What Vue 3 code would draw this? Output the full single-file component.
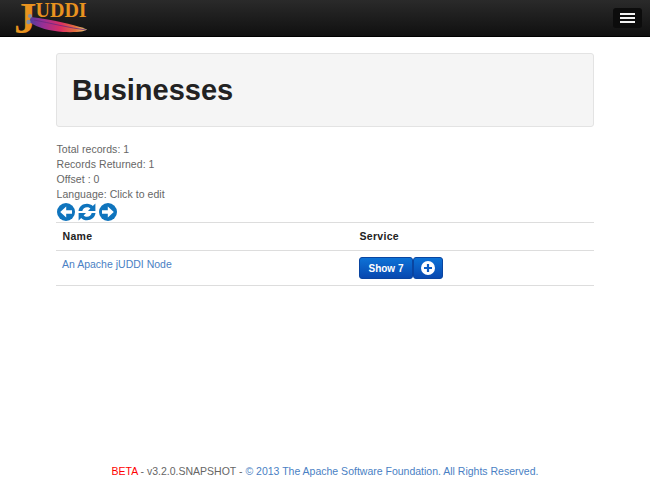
<script setup>
const stats = ['Total records: 1', 'Records Returned: 1', 'Offset : 0', 'Language: Click to edit']
</script>

<template>
  <div class="page">
    <header class="navbar">
      <a class="brand">
        <span class="j">J</span><span class="uddi">UDDI</span>
        <svg class="feather" width="64" height="22" viewBox="0 0 64 22">
          <defs>
            <linearGradient id="fg" x1="0" y1="0" x2="1" y2="0">
              <stop offset="0" stop-color="#4d3f9c" />
              <stop offset="0.25" stop-color="#9a2f96" />
              <stop offset="0.55" stop-color="#dc2f62" />
              <stop offset="0.8" stop-color="#e2703c" />
              <stop offset="1" stop-color="#e6cf7c" />
            </linearGradient>
          </defs>
          <path d="M5 4 C14 5 27 7 47 12 C53 13.500 58 15 61 16.500 C59 18.500 52 19.500 37 19 C24 18 12 15 3 9 Z" fill="url(#fg)" />
          <path d="M8 7 C24 10 44 15 60 17" stroke="#6a2a80" stroke-width="0.8" fill="none" />
          <circle cx="4" cy="3" r="2" fill="#8090a8" />
          <circle cx="2.500" cy="9" r="2.200" fill="#8090a8" />
        </svg>
      </a>
      <button class="toggle" aria-label="Menu">
        <span></span><span></span><span></span>
      </button>
    </header>

    <main class="container">
      <section class="jumbotron">
        <h1>Businesses</h1>
      </section>

      <div class="stats">
        <div v-for="s in stats" :key="s">{{ s }}</div>
      </div>

      <div class="pager">
        <svg width="18" height="18" viewBox="0 0 18 18">
          <circle cx="9" cy="9" r="9" fill="#0f74bd" />
          <path d="M15 7.200H9.200V3.600L3.200 9l6 5.400v-3.600H15z" fill="#fff" />
        </svg>
        <svg width="18" height="18" viewBox="0 0 18 18">
          <path d="M.5 8C1 3.600 4.600.8 9 .8c2.400 0 4.400.9 5.800 2.300L17.400.6V8h-7.400l2.400-2.400C11.600 4.800 10.400 4.300 9 4.300c-2.300 0-4.200 1.500-4.700 3.700z" fill="#0f74bd" />
          <path d="M17.500 10C17 14.400 13.400 17.200 9 17.200c-2.400 0-4.400-.9-5.800-2.300L.6 17.400V10h7.400l-2.400 2.400c.8.800 2 1.300 3.400 1.300 2.300 0 4.200-1.500 4.700-3.700z" fill="#0f74bd" />
        </svg>
        <svg width="18" height="18" viewBox="0 0 18 18">
          <circle cx="9" cy="9" r="9" fill="#0f74bd" />
          <path d="M3 7.200h5.800V3.600l6 5.400-6 5.400v-3.600H3z" fill="#fff" />
        </svg>
      </div>

      <table class="table">
        <thead>
          <tr>
            <th class="col-name">Name</th>
            <th>Service</th>
          </tr>
        </thead>
        <tbody>
          <tr>
            <td><a class="link">An Apache jUDDI Node</a></td>
            <td>
              <div class="btn-group">
                <button class="btn btn-show">Show 7</button>
                <button class="btn btn-icon" aria-label="Add">
                  <svg width="14" height="14" viewBox="0 0 14 14">
                    <circle cx="7" cy="7" r="7" fill="#fff" />
                    <path d="M5.900 3h2.200v2.900H11v2.200H8.100V11H5.900V8.100H3V5.900h2.900z" fill="#0b5cc4" />
                  </svg>
                </button>
              </div>
            </td>
          </tr>
        </tbody>
      </table>
    </main>

    <footer class="footer">
      <span class="beta">BETA</span> - v3.2.0.SNAPSHOT - <a class="link">© 2013 The Apache Software Foundation. All Rights Reserved.</a>
    </footer>
  </div>
</template>

<style scoped>
.page {
  height: 479px;
  display: flex;
  flex-direction: column;
  font-family: "Liberation Sans", Arial, sans-serif;
  font-size: 10.5px;
  line-height: 15px;
  color: #666;
  background: #fff;
}
.navbar {
  height: 37px;
  flex: none;
  box-sizing: border-box;
  display: flex;
  align-items: flex-start;
  justify-content: space-between;
  padding: 0 8px 0 14px;
  background: linear-gradient(#2a2a2a, #101010);
  border-bottom: 1px solid #000;
}
.brand {
  position: relative;
  display: flex;
  align-items: flex-start;
  height: 36px;
  font-family: "Liberation Serif", serif;
  color: #e8931f;
  font-weight: 700;
}
.feather {
  position: absolute;
  left: 12px;
  top: 13px;
}
.j {
  font-size: 45px;
  line-height: 37px;
}
.uddi {
  font-size: 20px;
  line-height: 20px;
  margin-left: -1px;
}
.toggle {
  width: 29px;
  height: 20px;
  margin-top: 8px;
  padding: 0;
  display: flex;
  flex-direction: column;
  align-items: center;
  justify-content: center;
  gap: 2px;
  background: #0c0c0c;
  border: none;
  border-radius: 3px;
}
.toggle span {
  display: block;
  height: 2px;
  width: 15px;
  background: #f2f2f2;
}
.container {
  width: 537.5px;
  margin: 16px 0 0 56px;
  flex: 1;
}
.jumbotron {
  height: 74px;
  box-sizing: border-box;
  padding: 0 15px;
  display: flex;
  align-items: center;
  background: #f5f5f5;
  border: 1px solid #e3e3e3;
  border-radius: 3px;
}
h1 {
  margin: 0;
  font-size: 29px;
  line-height: 32px;
  font-weight: 700;
  color: #222;
}
.stats {
  margin-top: 15px;
  letter-spacing: 0.06px;
  padding-left: 0.5px;
}
.pager {
  display: flex;
  gap: 3px;
  height: 18px;
  margin-top: 1px;
  margin-bottom: 1px;
  padding-left: 0.5px;
}
.table {
  width: 100%;
  border-collapse: collapse;
  table-layout: fixed;
}
th {
  text-align: left;
  font-weight: 700;
  color: #222;
  letter-spacing: 0.3px;
  padding: 6px 6.5px;
  height: 28px;
  box-sizing: border-box;
  border-top: 1px solid #ddd;
  border-bottom: 1px solid #ddd;
}
.col-name {
  width: 297px;
}
td {
  padding: 6px;
  height: 35px;
  box-sizing: border-box;
  vertical-align: top;
  border-bottom: 1px solid #ddd;
}
.link {
  color: #4a7fc4;
}
.btn-group {
  display: flex;
}
.btn {
  height: 22px;
  padding: 0;
  font: 700 10px "Liberation Sans", Arial, sans-serif;
  white-space: nowrap;
  color: #fff;
  background: linear-gradient(#0d72d6, #0848b0);
  border: 1px solid #0a45a0;
  border-radius: 3px;
  box-sizing: border-box;
  display: flex;
  align-items: center;
  justify-content: center;
}
.btn-show {
  width: 54px;
}
.btn-icon {
  width: 30px;
}
.footer {
  flex: none;
  height: 16px;
  text-align: center;
  line-height: 16px;
}
.beta {
  color: #f00;
}
</style>
